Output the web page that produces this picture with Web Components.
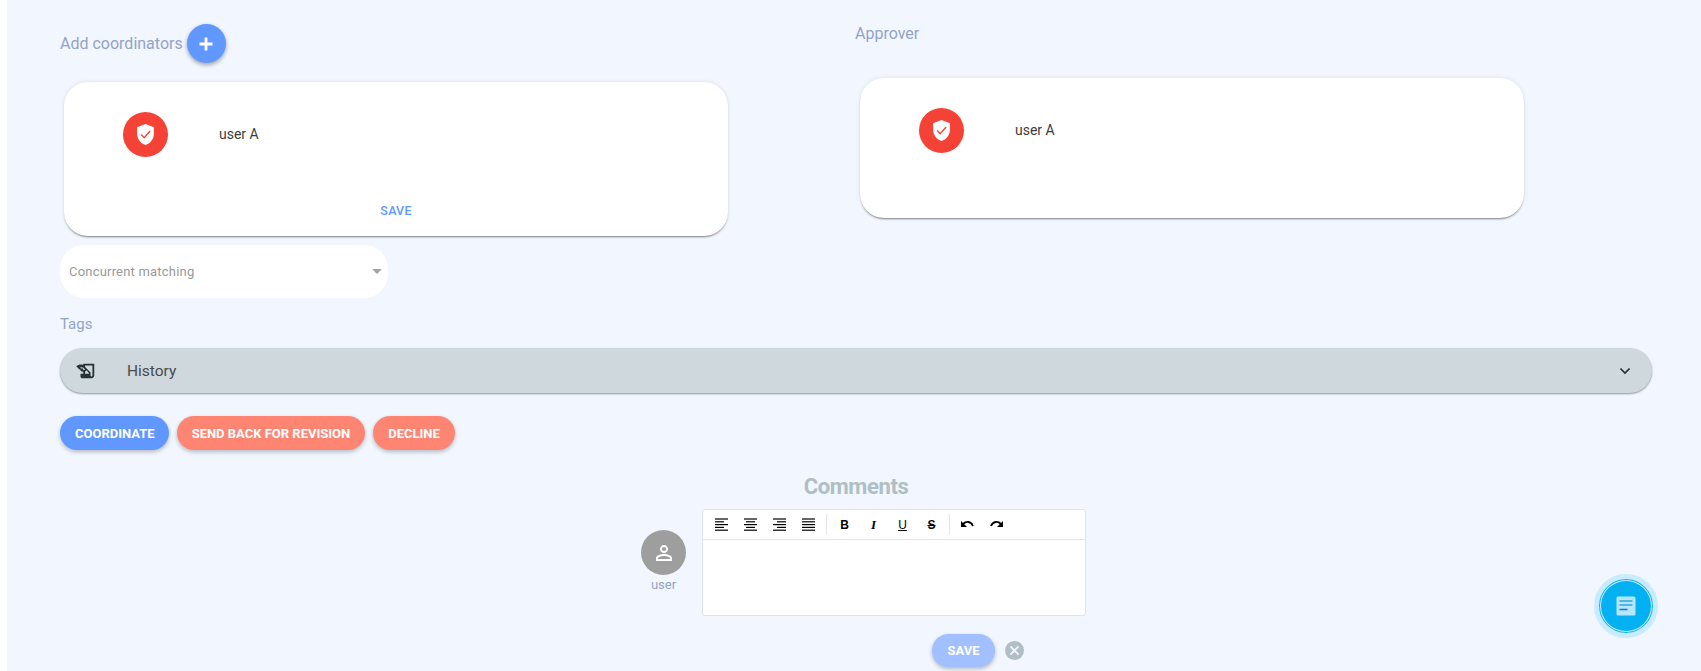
<!DOCTYPE html>
<html>
<head>
<meta charset="utf-8">
<title>Coordination</title>
<style>
    html, body { margin: 0; padding: 0; background: #fff; overflow: hidden; }
    body { font-family: Roboto, "Liberation Sans", sans-serif; }
    .col-left { display: flex; flex-direction: column; align-items: flex-start; padding-top: 24px; }
    .col-right { display: flex; flex-direction: column; align-items: flex-start; padding-top: 24px; }
    .head-row { display: flex; align-items: center; gap: 4px; }
</style>
</head>
<body>

<form-page>
    <two-columns>
        <div slot="left" class="col-left">
            <div class="head-row">
                <section-label>Add coordinators</section-label>
                <add-button></add-button>
            </div>
            <person-card name="user A" action="SAVE" style="margin: 19px 0 0 4px; height: 154px"></person-card>
            <select-box style="margin-top: 9px">Concurrent matching</select-box>
        </div>
        <div slot="right" class="col-right">
            <section-label>Approver</section-label>
            <person-card name="user A" style="margin: 34px 0 0 5px; height: 140px"></person-card>
        </div>
    </two-columns>

    <section-label style="margin-top: 16px; font-size: 15px">Tags</section-label>
    <history-bar style="margin-top: 14px">History</history-bar>

    <action-row style="margin-top: 23px">
        <pill-button style="padding-right: 14px">COORDINATE</pill-button>
        <pill-button tone="red">SEND BACK FOR REVISION</pill-button>
        <pill-button tone="red">DECLINE</pill-button>
    </action-row>

    <comment-box style="margin-top: 21px"></comment-box>
</form-page>

<chat-fab></chat-fab>

<script>
// helper, every component does the same thing in its constructor
function mount(el, html) {
    const template = document.createElement("template");
    template.innerHTML = html;
    el.attachShadow({ mode: "open" });
    el.shadowRoot.appendChild(template.content.cloneNode(true));
}

const SHADOW = "0 2px 2px -1px rgba(0, 0, 0, 0.45), 0 0 4px rgba(0, 0, 0, 0.1)";

class FormPage extends HTMLElement {
    constructor() {
        super();
        mount(this, `
        <style>
            :host {
                display: flex;
                flex-direction: column;
                box-sizing: border-box;
                margin-left: 7px;
                height: 671px;
                padding: 0 49px 0 53px;
                background: #f1f6ff;
            }
        </style>
        <slot></slot>`);
    }
}

class TwoColumns extends HTMLElement {
    constructor() {
        super();
        mount(this, `
        <style>
            :host { display: grid; grid-template-columns: 795px 1fr; }
        </style>
        <slot name="left"></slot>
        <slot name="right"></slot>`);
    }
}

class SectionLabel extends HTMLElement {
    constructor() {
        super();
        mount(this, `
        <style>
            :host {
                display: block;
                height: 20px;
                line-height: 20px;
                font-size: 16px;
                color: #93a4c6;
                white-space: nowrap;
            }
        </style>
        <slot></slot>`);
    }
}

class AddButton extends HTMLElement {
    constructor() {
        super();
        mount(this, `
        <style>
            :host {
                display: flex;
                align-items: center;
                justify-content: center;
                width: 39px;
                height: 39px;
                border-radius: 50%;
                background: #6198ff;
                box-shadow: 0 2px 4px rgba(0, 0, 0, 0.35);
            }
        </style>
        <svg width="16" height="16" viewBox="0 0 16 16">
            <path d="M8 1.5v13M1.5 8h13" stroke="#fff" stroke-width="2.8" fill="none"/>
        </svg>`);
    }
}

class PersonCard extends HTMLElement {
    constructor() {
        super();
        const action = this.getAttribute("action");
        mount(this, `
        <style>
            :host {
                display: flex;
                flex-direction: column;
                box-sizing: border-box;
                width: 664px;
                padding: 30px 0 7px 59px;
                background: #fff;
                border-radius: 24px;
                box-shadow: ${SHADOW};
            }
            .row { display: flex; align-items: center; gap: 51px; }
            .badge {
                display: flex;
                align-items: center;
                justify-content: center;
                width: 45px;
                height: 45px;
                border-radius: 50%;
                background: #f44336;
            }
            .name { margin-top: -2px; font-size: 14px; color: #3c3c3c; }
            .foot {
                margin: auto 0 0 -59px;
                height: 36px;
                line-height: 36px;
                text-align: center;
                font-size: 12.5px;
                font-weight: 500;
                letter-spacing: 0.2px;
                color: #6198ff;
            }
        </style>
        <div class="row">
            <div class="badge">
                <svg width="19" height="21" viewBox="2 1 16 20">
                    <path d="M10 1L2 4v6c0 5.4 3.4 9.6 8 11 4.6-1.4 8-5.6 8-11V4z" fill="#fff"/>
                    <path d="M5.8 11l3 3 5.6-6.4" stroke="#f44336" stroke-width="1.3" fill="none"/>
                </svg>
            </div>
            <div class="name">${this.getAttribute("name")}</div>
        </div>
        ${action ? `<div class="foot">${action}</div>` : ""}`);
    }
}

class SelectBox extends HTMLElement {
    constructor() {
        super();
        mount(this, `
        <style>
            :host {
                display: flex;
                align-items: center;
                justify-content: space-between;
                box-sizing: border-box;
                width: 328px;
                height: 53px;
                padding: 0 6px 0 9px;
                background: #fff;
                border-radius: 24px;
                font-size: 13px;
                letter-spacing: 0.2px;
                color: #999;
            }
            .arrow {
                width: 0;
                height: 0;
                border-left: 5px solid transparent;
                border-right: 5px solid transparent;
                border-top: 5px solid #a5a5a5;
            }
        </style>
        <slot></slot>
        <span class="arrow"></span>`);
    }
}

class HistoryBar extends HTMLElement {
    constructor() {
        super();
        mount(this, `
        <style>
            :host {
                display: flex;
                align-items: center;
                box-sizing: border-box;
                height: 45px;
                padding: 0 17px 0 15px;
                background: #cfd8dc;
                border-radius: 23px;
                box-shadow: 0 1px 2px rgba(0, 0, 0, 0.4);
                font-size: 15.5px;
                color: #4a4a4a;
            }
            .label { flex: 1; margin-left: 30px; }
            svg { display: block; }
        </style>
        <svg width="22" height="22" viewBox="0 0 24 24" fill="#263238">
            <path d="M9,4v1.38c-0.83-0.33-1.72-0.5-2.61-0.5c-1.79,0-3.58,0.68-4.95,2.05l3.33,3.33h1.11v1.11c0.86,0.86,1.98,1.31,3.11,1.36V15H6v3c0,1.1,0.9,2,2,2h10c1.66,0,3-1.34,3-3V4H9z M8.89,11.53v-2.15H6.74L5.59,8.23C6.06,7.96,6.59,7.82,7.14,7.82c0.89,0,1.73,0.35,2.36,0.98l1.41,1.41l-0.2,0.2c-0.51,0.51-1.19,0.8-1.92,0.8C8.89,11.21,8.89,11.53,8.89,11.53z M19,17c0,0.55-0.45,1-1,1s-1-0.45-1-1v-2h-6v-2.59c0.57-0.23,1.1-0.57,1.56-1.03l0.2-0.2L15.59,15H17v-1.41l-6-5.97V6h8V17z"/>
        </svg>
        <span class="label"><slot></slot></span>
        <svg width="20" height="20" viewBox="0 0 24 24">
            <path d="M6.5 9l5.5 5.5L17.5 9" stroke="#263238" stroke-width="2" fill="none"/>
        </svg>`);
    }
}

class ActionRow extends HTMLElement {
    constructor() {
        super();
        mount(this, `
        <style>
            :host { display: flex; gap: 8px; }
        </style>
        <slot></slot>`);
    }
}

class PillButton extends HTMLElement {
    constructor() {
        super();
        mount(this, `
        <style>
            :host {
                display: flex;
                align-items: center;
                height: 34px;
                padding: 0 15px;
                border-radius: 17px;
                background: #6198ff;
                color: #fff;
                font-size: 13px;
                font-weight: 700;
                white-space: nowrap;
                box-shadow: 0 2px 4px rgba(0, 0, 0, 0.25);
            }
            :host([tone="red"]) { background: #ff8573; }
            :host([tone="soft"]) { background: #a2bfff; height: 33px; }
        </style>
        <slot></slot>`);
    }
}

class RichEditor extends HTMLElement {
    constructor() {
        super();
        const lines = (rows) => `<svg width="15" height="15" viewBox="0 0 15 15">${rows
            .map(([a, b], i) => `<path d="M${a} ${2 + i * 2.8}H${b}" stroke="#000" stroke-width="1.2"/>`)
            .join("")}</svg>`;
        mount(this, `
        <style>
            :host {
                display: block;
                box-sizing: border-box;
                width: 384px;
                height: 107px;
                background: #fff;
                border: 1px solid #dfe3ea;
                border-radius: 3px;
            }
            .bar {
                display: flex;
                align-items: center;
                height: 29px;
                padding-left: 4px;
                border-bottom: 1px solid #e2e5ea;
            }
            .tool {
                display: flex;
                align-items: center;
                justify-content: center;
                width: 29px;
                height: 20px;
                font-family: "Liberation Sans", sans-serif;
                font-size: 12px;
                font-weight: 700;
                line-height: 1;
                color: #000;
            }
            .sep { width: 1px; height: 21px; margin: 0 3px; background: #e2e5ea; }
            .i { font-family: "Liberation Serif", serif; font-size: 13px; font-style: italic; }
            .u { text-decoration: underline; font-weight: 400; }
            .s { text-decoration: line-through; }
        </style>
        <div class="bar">
            <span class="tool">${lines([[1, 14], [1, 10], [1, 14], [1, 10], [1, 14]])}</span>
            <span class="tool">${lines([[1, 14], [3, 12], [1, 14], [3, 12], [1, 14]])}</span>
            <span class="tool">${lines([[1, 14], [5, 14], [1, 14], [5, 14], [1, 14]])}</span>
            <span class="tool">${lines([[1, 14], [1, 14], [1, 14], [1, 14], [1, 14]])}</span>
            <span class="sep"></span>
            <span class="tool">B</span>
            <span class="tool i">I</span>
            <span class="tool u">U</span>
            <span class="tool s">S</span>
            <span class="sep"></span>
            <span class="tool">
                <svg width="15" height="15" viewBox="0 0 15 15">
                    <path d="M3 7c3-3 8-3 10 2" stroke="#000" stroke-width="1.8" fill="none"/>
                    <path d="M1 4v6h6z"/>
                </svg>
            </span>
            <span class="tool">
                <svg width="15" height="15" viewBox="0 0 15 15">
                    <path d="M12 7C9 4 4 4 2 9" stroke="#000" stroke-width="1.8" fill="none"/>
                    <path d="M14 4v6H8z"/>
                </svg>
            </span>
        </div>`);
    }
}

class CommentBox extends HTMLElement {
    constructor() {
        super();
        mount(this, `
        <style>
            :host { display: block; }
            h3 {
                margin: 0;
                height: 30px;
                line-height: 32px;
                text-align: center;
                font-size: 22px;
                font-weight: 700;
                letter-spacing: -0.4px;
                color: #b0bec5;
            }
            .row {
                display: flex;
                align-items: center;
                justify-content: center;
                gap: 16px;
                margin-top: 8px;
                padding-left: 15px;
            }
            .who { display: flex; flex-direction: column; align-items: center; }
            .avatar {
                display: flex;
                align-items: center;
                justify-content: center;
                width: 45px;
                height: 45px;
                border-radius: 50%;
                background: #9e9e9e;
            }
            .who span { height: 20px; line-height: 20px; font-size: 13px; color: #93a4c6; }
            .foot {
                display: flex;
                align-items: center;
                justify-content: center;
                gap: 10px;
                margin-top: 18px;
                padding-left: 244px;
            }
            .cancel {
                display: flex;
                align-items: center;
                justify-content: center;
                width: 19px;
                height: 19px;
                border-radius: 50%;
                background: #b0bec5;
            }
        </style>
        <h3>Comments</h3>
        <div class="row">
            <div class="who">
                <div class="avatar">
                    <svg width="24" height="24" viewBox="0 0 24 24" fill="#fff">
                        <path d="M12 5.9a2.1 2.1 0 1 1 0 4.2 2.1 2.1 0 0 1 0-4.2m0 9c2.97 0 6.1 1.46 6.1 2.1v1.1H5.9V17c0-.64 3.13-2.1 6.1-2.1M12 4C9.79 4 8 5.79 8 8s1.79 4 4 4 4-1.79 4-4-1.79-4-4-4zm0 9c-2.67 0-8 1.34-8 4v3h16v-3c0-2.66-5.33-4-8-4z"/>
                    </svg>
                </div>
                <span>user</span>
            </div>
            <rich-editor></rich-editor>
        </div>
        <div class="foot">
            <pill-button tone="soft">SAVE</pill-button>
            <span class="cancel">
                <svg width="11" height="11" viewBox="0 0 11 11">
                    <path d="M1.5 1.5l8 8M9.5 1.5l-8 8" stroke="#f0f5ff" stroke-width="1.8"/>
                </svg>
            </span>
        </div>`);
    }
}

class ChatFab extends HTMLElement {
    constructor() {
        super();
        mount(this, `
        <style>
            /* floats over the page, bottom right */
            :host {
                position: fixed;
                left: 1594px;
                top: 574px;
                display: flex;
                align-items: center;
                justify-content: center;
                box-sizing: border-box;
                width: 64px;
                height: 64px;
                border-radius: 50%;
                background: #03b1f3;
                border: 5px solid #c8ecfd;
                box-shadow: inset 0 0 0 1px #03b1f3, inset 0 0 0 2px #c8ecfd;
            }
        </style>
        <svg width="20" height="20" viewBox="0 0 20 20">
            <rect x="0.5" y="0.5" width="19" height="19" rx="1.5" fill="#b5e6fb"/>
            <path d="M3.5 5h13M3.5 9h13" stroke="#2fa6e0" stroke-width="1.6"/>
            <path d="M3.5 13.5h8" stroke="#1b7fc0" stroke-width="1.6"/>
        </svg>`);
    }
}

// Call Function
customElements.define("form-page", FormPage);
customElements.define("two-columns", TwoColumns);
customElements.define("section-label", SectionLabel);
customElements.define("add-button", AddButton);
customElements.define("person-card", PersonCard);
customElements.define("select-box", SelectBox);
customElements.define("history-bar", HistoryBar);
customElements.define("action-row", ActionRow);
customElements.define("pill-button", PillButton);
customElements.define("rich-editor", RichEditor);
customElements.define("comment-box", CommentBox);
customElements.define("chat-fab", ChatFab);
</script>
</body>
</html>
